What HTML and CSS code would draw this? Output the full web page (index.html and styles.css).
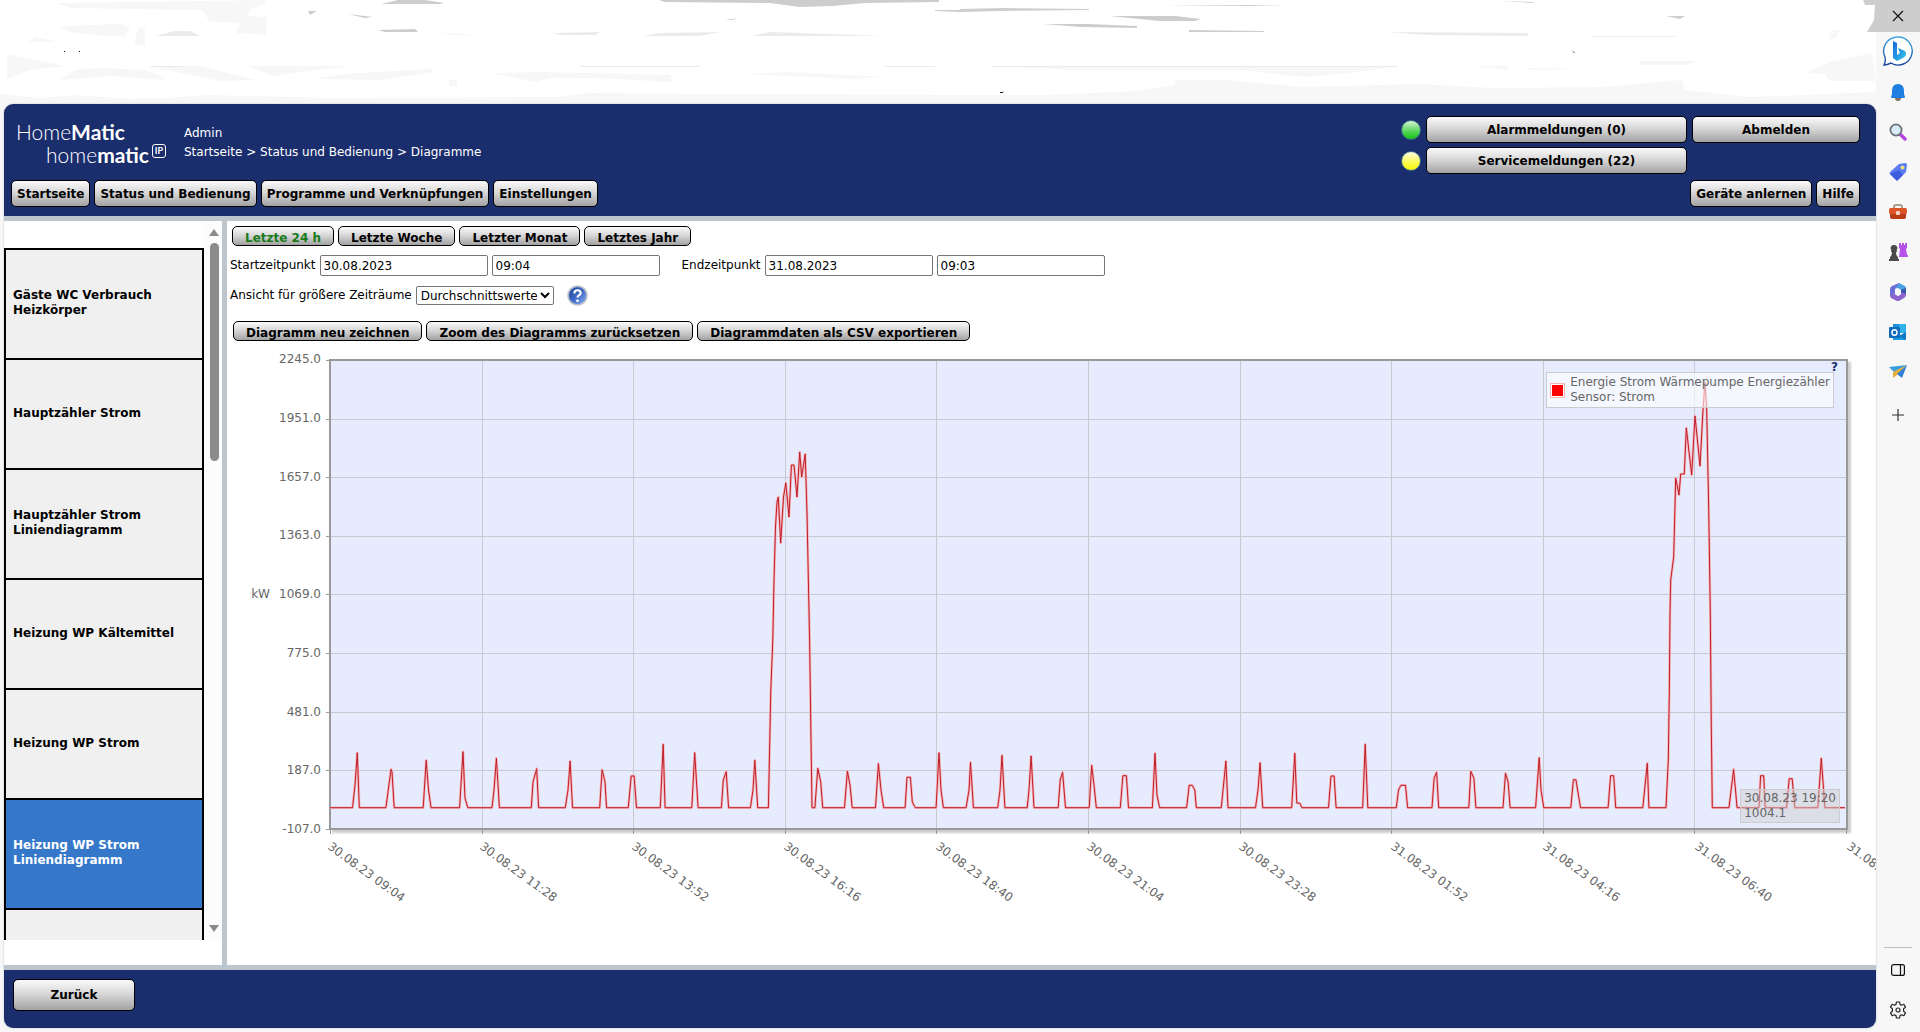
FILE: index.html
```html
<!DOCTYPE html>
<html lang="de">
<head>
    <meta charset="UTF-8">
    <meta name="viewport" content="width=device-width, initial-scale=1.0">
    <link rel="stylesheet" href="styles.css">
    <title>HomeMatic WebUI</title>
</head>
<body>

<div class="page">
    <svg class="browser-top" viewBox="0 0 1876 104" preserveAspectRatio="none" aria-hidden="true">
        <g fill="#f7f7f7">
            <path d="M57 3L266 0L264 4L250 9L246 23L210 22L202 10L70 8Z"/>
            <path d="M60 27L90 25L120 24L130 28L124 36L105 36L70 32Z"/>
            <path d="M28 42L36 37L58 42ZM134 44L138 28L145 27V46ZM236 35L240 24L250 16L267 17L266 35L244 33Z"/>
            <path d="M7 54L65 66L30 70L7 79ZM60 80L75 70L100 68L145 70L162 76L165 80L110 76Z"/>
            <path d="M150 66L200 66L255 80L220 81L190 75ZM247 66H350L300 72L275 76ZM315 79L345 74L430 69L434 72L380 80Z"/>
            <path d="M493 73L540 72L672 75L670 82L600 78L550 78L535 82ZM449 80H457V86H449ZM745 74L790 72L885 77L850 79Z"/>
            <path d="M992 66H1398L1350 73L1305 77L1240 70L1080 70ZM1475 66H1508V70ZM1528 68L1590 69L1530 70ZM1639 61L1695 61L1690 65H1639Z"/>
            <path d="M1805 73L1830 62L1872 53L1876 81H1830L1825 74ZM1832 30L1839 30L1836 38L1828 40Z"/>
            <path d="M0 94L40 98L75 95L130 99L165 98L210 95L330 98L560 97L590 93L700 94L960 95L1049 95L1137 91L1175 85V80H1223L1303 87L1419 84L1493 88L1603 87L1682 80L1685 90L1750 97L1876 92V104H0Z"/>
        </g>
        <g fill="#ebebeb">
            <path d="M155 36L175 31L190 31L200 36ZM435 32L478 36L460 35ZM552 33L600 32L595 35L560 35ZM643 36L660 33L720 32L700 36ZM752 36L770 32L885 36Z"/>
            <path d="M1388 32L1528 33V36L1425 35ZM1592 36H1675V37H1592ZM150 66H185V67H150ZM580 66H700V67H580ZM885 66H935V67H885ZM992 66H1398V67H992Z"/>
        </g>
        <g fill="#cdcdcd">
            <path d="M381 4L398 0L425 0L444 3L440 4ZM659 0H939V2L865 3L832 6L800 7L770 3L665 2ZM935 10H960V12L935 11Z"/>
            <path d="M960 9L1004 8L1089 9V10L1000 11L960 12ZM348 14L373 17L365 18ZM308 11H317L310 15ZM378 30L415 29L418 32H385ZM725 20L738 18L732 20Z"/>
            <path d="M1161 5H1250L1285 6H1249ZM1109 16H1175L1201 19L1195 21H1160ZM1043 24H1088L1137 26V28L1080 27ZM1189 30L1264 31V32H1189Z"/>
            <path d="M1500 1L1533 2V3ZM1666 16H1685L1680 19ZM1863 0H1876V32H1867L1874 20L1875 5L1865 5Z"/>
        </g>
        <g fill="#222">
            <path d="M64 51H65V52H64ZM79 51H80V52H79ZM1572 50L1575 53H1574ZM1000 92L1003 92L1004 90L1003 93H1000Z"/>
        </g>
    </svg>

    <div class="app">
        <header class="header">
            <div class="header-top">
                <div class="logo">
                    <div>Home<b>Matic</b></div>
                    <div class="logo-ip">home<b>matic</b><span>IP</span></div>
                </div>
                <div class="crumbs">
                    <div>Admin</div>
                    <div><a href="#">Startseite</a> &gt; <a href="#">Status und Bedienung</a> &gt; <a href="#">Diagramme</a></div>
                </div>
                <div class="messages">
                    <i class="led led-green"></i>
                    <button class="btn">Alarmmeldungen (0)</button>
                    <button class="btn">Abmelden</button>
                    <i class="led led-yellow"></i>
                    <button class="btn">Servicemeldungen (22)</button>
                </div>
            </div>
            <nav class="nav">
                <button class="btn">Startseite</button>
                <button class="btn">Status und Bedienung</button>
                <button class="btn">Programme und Verknüpfungen</button>
                <button class="btn">Einstellungen</button>
                <button class="btn push">Geräte anlernen</button>
                <button class="btn">Hilfe</button>
            </nav>
        </header>

        <div class="body">
            <aside class="left">
                <div class="list">
                    <a href="#">Gäste WC Verbrauch Heizkörper</a>
                    <a href="#">Hauptzähler Strom</a>
                    <a href="#">Hauptzähler Strom Liniendiagramm</a>
                    <a href="#">Heizung WP Kältemittel</a>
                    <a href="#">Heizung WP Strom</a>
                    <a href="#" class="active">Heizung WP Strom Liniendiagramm</a>
                    <a href="#" aria-label="Weiteres Diagramm"></a>
                </div>
                <div class="scrollbar" aria-hidden="true">
                    <i class="arrow-up"></i>
                    <i class="thumb"></i>
                    <i class="arrow-down"></i>
                </div>
            </aside>

            <main class="content">
                <div class="row tabs">
                    <button class="btn small on">Letzte 24 h</button>
                    <button class="btn small">Letzte Woche</button>
                    <button class="btn small">Letzter Monat</button>
                    <button class="btn small">Letztes Jahr</button>
                </div>
                <div class="row fields">
                    <label for="startDate">Startzeitpunkt</label>
                    <input type="text" id="startDate" value="30.08.2023">
                    <input type="text" aria-label="Startzeit" value="09:04">
                    <label for="endDate" class="end">Endzeitpunkt</label>
                    <input type="text" id="endDate" value="31.08.2023">
                    <input type="text" aria-label="Endzeit" value="09:03">
                </div>
                <div class="row view">
                    <label for="view">Ansicht für größere Zeiträume</label>
                    <select id="view">
                        <option>Durchschnittswerte</option>
                    </select>
                    <svg class="help" viewBox="0 0 20 20" role="img" aria-label="Hilfe">
                        <defs>
                            <linearGradient id="helpFill" x1="0" y1="0" x2="1" y2="1">
                                <stop offset="0" stop-color="#1c3f96"/>
                                <stop offset="0.5" stop-color="#3f69c4"/>
                                <stop offset="1" stop-color="#8fb4f5"/>
                            </linearGradient>
                        </defs>
                        <circle cx="10" cy="10" r="9" fill="url(#helpFill)" stroke="#b9bfcc" stroke-width="1.600"/>
                        <path d="M7 8Q7 5 10 5T13 8Q13 9 11 10Q10 11 10 12" fill="none" stroke="#fff" stroke-width="2"/>
                        <circle cx="10" cy="15" r="1.3" fill="#fff"/>
                    </svg>
                </div>
                <div class="row actions">
                    <button class="btn small">Diagramm neu zeichnen</button>
                    <button class="btn small">Zoom des Diagramms zurücksetzen</button>
                    <button class="btn small">Diagrammdaten als CSV exportieren</button>
                </div>

                <div class="chart">
                    <div class="unit">kW</div>
                    <div class="y-axis">
                        <span>2245.0</span>
                        <span>1951.0</span>
                        <span>1657.0</span>
                        <span>1363.0</span>
                        <span>1069.0</span>
                        <span>775.0</span>
                        <span>481.0</span>
                        <span>187.0</span>
                        <span>-107.0</span>
                    </div>
                    <div class="plot">
                        <svg viewBox="1 1 1515 467" preserveAspectRatio="none">
                            <g id="grid" stroke="#c8cacf"></g>
                            <g id="ticks" stroke="#999"></g>
                            <polyline id="glow" fill="none" stroke="#f6b3ba" stroke-width="2.600" stroke-linejoin="round"/>
                            <polyline id="line" fill="none" stroke="#bd1f29" stroke-width="1" stroke-linejoin="round"/>
                        </svg>
                        <b class="plot-help">?</b>
                        <div class="legend"><i></i><span>Energie Strom Wärmepumpe Energiezähler<br>Sensor: Strom</span></div>
                        <div class="cursor-info">30.08.23 19:20<br>1004.1</div>
                    </div>
                    <div class="x-axis">
                        <span>30.08.23 09:04</span>
                        <span>30.08.23 11:28</span>
                        <span>30.08.23 13:52</span>
                        <span>30.08.23 16:16</span>
                        <span>30.08.23 18:40</span>
                        <span>30.08.23 21:04</span>
                        <span>30.08.23 23:28</span>
                        <span>31.08.23 01:52</span>
                        <span>31.08.23 04:16</span>
                        <span>31.08.23 06:40</span>
                        <span>31.08.23 09:04</span>
                    </div>
                </div>
            </main>
        </div>

        <footer class="footer">
            <button class="btn">Zurück</button>
        </footer>
    </div>
</div>

<div class="sidebar">
    <button class="close" aria-label="Schließen">
        <svg width="12" height="12" viewBox="0 0 12 12"><path d="M1 1L11 11M11 1L1 11" stroke="#111" stroke-width="1.2"/></svg>
    </button>
    <button aria-label="Bing">
        <svg width="32" height="32" viewBox="0 0 32 32">
            <defs>
                <linearGradient id="bingRing" x1="0" y1="0" x2="0" y2="1"><stop offset="0" stop-color="#3aa6e0"/><stop offset="1" stop-color="#1c479e"/></linearGradient>
                <linearGradient id="bingB" x1="0" y1="0" x2="1" y2="1"><stop offset="0" stop-color="#1767d8"/><stop offset="1" stop-color="#37c6ea"/></linearGradient>
            </defs>
            <path d="M16 1A14 14 0 1 1 9 27Q5 29 2 29Q4 25 3 21A14 14 0 0 1 16 1Z" fill="#fff" stroke="url(#bingRing)" stroke-width="1.4"/>
            <path d="M11 5L15 7V19L18 17L16 12L23 15Q26 19 21 22L15 25L11 22Z" fill="url(#bingB)"/>
        </svg>
    </button>
    <button aria-label="Benachrichtigungen">
        <svg width="18" height="18" viewBox="0 0 18 18"><path d="M6 15H12Q12 18 9 18T6 15Z" fill="#8a6d5a"/><path d="M9 1Q15 1 15 8V11L16 14Q16 15 15 15H3Q2 15 2 14L3 11V8Q3 1 9 1Z" fill="#1f7fe0"/></svg>
    </button>
    <button aria-label="Suche">
        <svg width="18" height="18" viewBox="0 0 18 18"><path d="M11 11L16 16" stroke="#b344e0" stroke-width="3.4" stroke-linecap="round"/><circle cx="7" cy="7" r="5.6" fill="#d6ecfa" stroke="#6d7278" stroke-width="1.8"/></svg>
    </button>
    <button aria-label="Einkaufen">
        <svg width="18" height="18" viewBox="0 0 18 18"><path d="M10 1L16 0Q18 0 18 2L17 9L9 17Q8 18 7 17L1 11Q0 10 1 9Z" fill="#5b7df2"/><path d="M1 11L10 7L14 12L9 17Q8 18 7 17Z" fill="#3f5cdc"/><circle cx="13.500" cy="4.500" r="2" fill="#f5dc7a"/></svg>
    </button>
    <button aria-label="Tools">
        <svg width="18" height="16" viewBox="0 0 18 16"><path d="M5 5V3Q5 1 7 1H11Q13 1 13 3V5" fill="none" stroke="#96836f" stroke-width="1.600"/><rect y="4" width="18" height="6" rx="1.500" fill="#dc5428"/><path d="M1 10H17V13Q17 15 15 15H3Q1 15 1 13Z" fill="#b93c16"/><rect x="7" y="7" width="4" height="4" rx="1" fill="#f1d5c2"/></svg>
    </button>
    <button aria-label="Spiele">
        <svg width="20" height="20" viewBox="0 0 20 20"><path d="M11 1H13V3H14V1H16V3H17V1H19V6L18 7L19 13H20V15H11L12 7L11 6Z" fill="#b552ea"/><path d="M6 3A3 3 0 0 1 8 8.500H9V10H8Q8 14 10 15V17H11V19H1V17H2V15Q4 14 4 10H3V8.500H4A3 3 0 0 1 6 3Z" fill="#4a4a4c"/></svg>
    </button>
    <button aria-label="Microsoft 365">
        <svg width="18" height="20" viewBox="0 0 18 20"><path d="M10 1L3 4Q1 5 1 7V14L6 12V8Q6 7 7 6L12 3Z" fill="#6a6fd8"/><path d="M10 1L16 4Q17 5 17 7V13L12 10V8L7 6Z" fill="#4a9fe0"/><path d="M12 8L17 6V13L12 11Z" fill="#3558a8"/><path d="M17 12V13Q17 15 15 16L10 19Q9 19 8 19L2 16Q1 15 1 13L6 12L9 14L12 12V10Z" fill="#8c64cc"/><path d="M9 6L12 8V12L9 14L6 12V8Z" fill="#f7f7f7"/></svg>
    </button>
    <button aria-label="Outlook">
        <svg width="18" height="18" viewBox="0 0 18 18"><path d="M4 1H16V9H4Z" fill="#1b8fd8"/><path d="M10 1H17V10H10Z" fill="#32b2ea"/><path d="M4 9L11 13L17 9V16Q17 17 16 17H4Z" fill="#1a9be0"/><path d="M17 9L10 13L17 17Z" fill="#1378c4"/><rect y="4" width="11" height="11" rx="1" fill="#0f6cbd"/><ellipse cx="5.500" cy="9.500" rx="2.500" ry="2.800" fill="none" stroke="#fff" stroke-width="1.500"/></svg>
    </button>
    <button aria-label="Drop">
        <svg width="18" height="14" viewBox="0 0 18 14"><path d="M0 2L18 0L6 8Z" fill="#3aa0dc"/><path d="M4 7L18 0L8 10L4 13Z" fill="#e7ae3c"/><path d="M18 0L13 13L8 9Z" fill="#2d7fd6"/></svg>
    </button>
    <button class="plus" aria-label="Hinzufügen">
        <svg width="14" height="14" viewBox="0 0 14 14"><path d="M7 1V13M1 7H13" stroke="#333" stroke-width="1.200"/></svg>
    </button>
    <hr>
    <button aria-label="Randleiste">
        <svg width="14" height="12" viewBox="0 0 14 12" fill="none" stroke="#111" stroke-width="1.200"><rect x="0.600" y="0.600" width="12.800" height="10.800" rx="2"/><path d="M9.500 1V11"/></svg>
    </button>
    <button aria-label="Einstellungen">
        <svg width="18" height="18" viewBox="0 0 18 18" fill="none" stroke="#222" stroke-width="1.200"><path d="M7.400 1H10.600L11 3.400L12.500 4.200L14.800 3.300L16.500 6.100L14.600 7.700V10.300L16.500 11.900L14.800 14.700L12.500 13.800L11 14.600L10.600 17H7.400L7 14.600L5.500 13.800L3.200 14.700L1.500 11.900L3.400 10.300V7.700L1.500 6.100L3.200 3.300L5.500 4.200L7 3.400Z" stroke-linejoin="round"/><circle cx="9" cy="9" r="2"/></svg>
    </button>
</div>

<script>
    const BASE = 447.7;

    // each entry is one run of the pump: x, y, x, y, ...
    // the line falls back to BASE between the runs
    const runs = [
        [22.5, BASE, 25, 425, 27.3, 392.7, 29.3, BASE],
        [55.9, BASE, 61, 409.3, 62, 412, 64.2, BASE],
        [93.2, BASE, 96.2, 400.3, 98.5, 430, 101, BASE],
        [129.6, BASE, 133, 391.7, 135, 438, 137.8, BASE],
        [162, BASE, 164, 430, 166.4, 398.3, 169.4, BASE],
        [201.3, BASE, 203, 422, 206.7, 408.7, 208.6, BASE],
        [235.3, BASE, 238, 430, 240.1, 401, 242.5, BASE],
        [269.7, BASE, 272.1, 409.7, 275, 421.7, 276.5, BASE],
        [298.3, BASE, 301.2, 416, 304.1, 416, 306.5, BASE],
        [330.3, BASE, 333.2, 384.3, 335.1, BASE],
        [361.8, BASE, 364.7, 392.7, 368.1, BASE],
        [391.4, BASE, 393.3, 420, 396.2, 411.7, 398.6, BASE],
        [420.4, BASE, 423, 430, 424.8, 400.3, 427.7, BASE],
        [438.4, BASE, 440.8, 330, 442.8, 280, 444, 220, 445.5, 167, 447, 142, 448.3, 137, 450.7, 183, 453.5, 137,
            455.8, 123, 459, 157, 461.4, 105, 464, 105, 467, 137, 469.7, 92, 471.7, 117, 475.2, 94,
            477, 153, 479.6, 280, 482, BASE],
        [484.9, BASE, 487.8, 408.3, 490.7, 421.7, 492.7, BASE],
        [514.5, BASE, 517.4, 411, 520, 425, 522.2, BASE],
        [545.5, BASE, 548.4, 403.7, 551, 430, 553.7, BASE],
        [575.1, BASE, 577, 417.3, 580.4, 417.3, 582.3, 442, 585.3, BASE],
        [606.1, BASE, 609, 392.7, 611, 430, 613.4, BASE],
        [636.1, BASE, 639, 430, 640.5, 402.3, 643.4, BASE],
        [667.7, BASE, 670, 430, 672, 395.3, 674.9, BASE],
        [697.2, BASE, 699, 430, 701.1, 396, 704, BASE],
        [728.2, BASE, 730.2, 420, 732.6, 412.3, 735.5, BASE],
        [759.2, BASE, 761.7, 405.3, 764, 425, 766.3, BASE],
        [790.3, BASE, 792.9, 415.7, 796.4, 415.7, 798.5, BASE],
        [822.4, BASE, 825, 393.3, 827, 435, 829.6, BASE],
        [856.6, BASE, 859.2, 425.3, 862.2, 425.3, 864.8, 430, 866.3, BASE],
        [891.3, BASE, 895.9, 401, 898, BASE],
        [925.5, BASE, 928, 430, 930.1, 402.7, 932.7, BASE],
        [961.7, BASE, 964.8, 393.3, 966.8, 443, 969.9, 443.3, 971.9, BASE],
        [998.5, BASE, 1001, 416, 1004.1, 416, 1006.1, BASE],
        [1032.7, BASE, 1035.2, 384.3, 1037.8, BASE],
        [1066.3, BASE, 1068.5, 430, 1070.9, 425.3, 1075.5, 425.3, 1077.6, BASE],
        [1102, BASE, 1104.1, 418.3, 1106.6, 412.3, 1108.7, BASE],
        [1138.8, BASE, 1140.8, 411.3, 1143.9, 418.3, 1145.9, BASE],
        [1173, BASE, 1175.5, 413.3, 1178.1, 421.7, 1180.1, BASE],
        [1205.6, BASE, 1209.2, 397.7, 1211, 430, 1213.8, BASE],
        [1240.8, BASE, 1243.4, 419.7, 1245.9, 419.7, 1250.5, BASE],
        [1278.1, BASE, 1280.6, 415.7, 1283.7, 415.7, 1285.7, BASE],
        [1312.8, BASE, 1317.3, 403.3, 1318.9, BASE],
        [1336, BASE, 1338.3, 400, 1339.3, 333, 1340, 253, 1340.7, 220, 1343.7, 197, 1345.7, 118, 1349, 135,
            1350.7, 114, 1354.3, 114, 1356.3, 68, 1361.7, 115, 1365, 56, 1370, 106, 1373, 50, 1375, 22,
            1376.7, 50, 1378.7, 147, 1380.3, 253, 1381.3, 367, 1382.3, BASE],
        [1399, BASE, 1403.6, 409.3, 1407.1, BASE],
        [1429, BASE, 1430.6, 415.7, 1433.7, 415.7, 1435.2, BASE],
        [1456.6, BASE, 1459.2, 418.7, 1462.2, 418.7, 1464.8, BASE],
        [1487.8, BASE, 1491.3, 398.3, 1494.9, BASE]
    ];

    const points = [0, BASE, ...runs.flat(), 1515, BASE].join(' ');
    document.getElementById('glow').setAttribute('points', points);
    document.getElementById('line').setAttribute('points', points);

    function addLine(parent, x1, y1, x2, y2) {
        const line = document.createElementNS('http://www.w3.org/2000/svg', 'line');
        line.setAttribute('x1', x1);
        line.setAttribute('y1', y1);
        line.setAttribute('x2', x2);
        line.setAttribute('y2', y2);
        document.getElementById(parent).appendChild(line);
    }

    for (let i = 0; i <= 10; i++) {
        const x = Math.round(i * 151.6) + 0.5;
        if (i > 0 && i < 10) addLine('grid', x, 1, x, 468);
        addLine('ticks', x, 470, x, 474);
    }
    for (let i = 0; i <= 8; i++) {
        const y = Math.round(i * 58.6) + 0.5;
        if (i > 0 && i < 8) addLine('grid', 1, y, 1516, y);
        addLine('ticks', -4, y, 0, y);
    }
</script>

</body>
</html>
```
FILE: styles.css
```css
* {
    box-sizing: border-box;
}

body {
    margin: 0;
    height: 100vh;
    display: flex;
    background: #f7f7f7;
    font-family: Verdana, "DejaVu Sans", sans-serif;
    font-size: 12px;
    line-height: 15px;
    color: #000;
}

a {
    color: inherit;
    text-decoration: none;
}

button, input, select {
    font: inherit;
}

.page {
    flex: 1;
    min-width: 0;
    display: flex;
    flex-direction: column;
}

.browser-top {
    display: block;
    width: 100%;
    height: 104px;
    background: #fff;
}

.app {
    flex: 1;
    min-height: 0;
    margin: 0 0 4px 4px;
    display: flex;
    flex-direction: column;
    background: #fff;
    border-radius: 9px;
    overflow: hidden;
    box-shadow: 0 0 2px #bbb;
}

/* buttons */
.btn {
    height: 27px;
    padding: 1px 5px 0;
    border: 1px solid #000;
    border-radius: 5px;
    background: linear-gradient(#fafafa, #d4d4d4 50%, #a2a2a2);
    font-weight: bold;
    color: #000;
    white-space: nowrap;
}

.btn.small {
    height: 20px;
    padding: 4px 12px 0;
    line-height: 15px;
}

.btn.on {
    color: #1a7a1a;
}

/* header */
.header {
    display: flex;
    flex-direction: column;
    gap: 6px;
    padding: 12px 16px 9px 7px;
    background: #1a2d6d;
    border-bottom: 5px solid #bcc6cc;
    color: #fff;
}

.header-top {
    display: flex;
}

.logo {
    width: 173px;
    padding: 4px 0 0 5px;
    font-family: Lato, sans-serif;
    font-size: 21px;
    font-weight: 300;
    line-height: 23px;
}

.logo b {
    font-weight: 700;
}

.logo-ip {
    display: flex;
    padding-left: 30px;
}

.logo-ip span {
    width: 14px;
    height: 14px;
    margin: 1px 0 0 3px;
    border: 1px solid #fff;
    border-radius: 3px;
    font-size: 9px;
    font-weight: bold;
    line-height: 12px;
    text-align: center;
}

.crumbs {
    padding-top: 8px;
    line-height: 19px;
}

.messages {
    display: grid;
    grid-template-columns: 20px 261px 168px;
    gap: 4px 5px;
    align-items: center;
    margin-left: auto;
}

.led {
    height: 20px;
    border-radius: 50%;
    border: 1px solid #3a6a8a;
}

.led-green {
    background: linear-gradient(#d5f5d5, #5cd65c 55%, #12c412);
}

.led-yellow {
    background: linear-gradient(#ffffe4, #fbfb58 55%, #f7f70c);
}

.nav {
    display: flex;
    gap: 4px;
}

.nav .push {
    margin-left: auto;
}

/* list on the left */
.body {
    flex: 1;
    min-height: 0;
    display: flex;
}

.left {
    flex: none;
    width: 223px;
    padding-bottom: 25px;
    border-right: 5px solid #bcc6cc;
    display: flex;
}

.list {
    width: 200px;
    margin-top: 27px;
    overflow: hidden;
    display: flex;
    flex-direction: column;
}

.list a {
    flex: 0 0 110px;
    display: flex;
    align-items: center;
    padding: 0 40px 2px 7px;
    border: 2px solid #000;
    border-bottom: 0;
    background: #f0f0f0;
    font-weight: bold;
}

.list a:not(:first-child) {
    padding-right: 20px;
}

.list a.active {
    background: #3578ca;
    color: #fff;
}

.scrollbar {
    flex: 1;
    display: flex;
    flex-direction: column;
    align-items: center;
    padding: 8px 0 8px 2px;
    background: #fcfcfc;
}

.arrow-up, .arrow-down {
    border: 5px solid transparent;
}

.arrow-up {
    border-top: 0;
    border-bottom: 7px solid #8b8b8b;
}

.arrow-down {
    margin-top: auto;
    border-bottom: 0;
    border-top: 7px solid #8b8b8b;
}

.thumb {
    width: 9px;
    height: 218px;
    margin-top: 7px;
    border-radius: 5px;
    background: #8b8b8b;
}

/* content */
.content {
    flex: 1;
    min-width: 0;
    display: flex;
    flex-direction: column;
    padding: 5px 28px 0 3px;
    overflow: hidden;
}

.row {
    display: flex;
    align-items: center;
    gap: 4px;
}

.tabs {
    padding-left: 2px;
    margin-bottom: 9px;
}

.fields {
    margin-bottom: 9px;
}

.fields input {
    width: 168px;
    height: 21px;
    padding: 0 3px;
    border: 1px solid #767676;
    border-radius: 2px;
}

.fields .end {
    margin-left: 18px;
}

.view {
    margin-bottom: 15px;
}

.view select {
    width: 138px;
    height: 19px;
    padding: 0;
    border: 1px solid #767676;
    border-radius: 2px;
    background: #fff;
}

.help {
    width: 21px;
    height: 21px;
    margin-left: 9px;
}

.actions {
    padding-left: 3px;
    margin-bottom: 18px;
}

/* diagram */
.chart {
    flex: 1;
    min-height: 0;
    display: grid;
    grid-template-columns: 40px 59px 1fr;
    grid-template-rows: 1fr 135px;
    color: #666;
}

.unit {
    align-self: center;
    text-align: right;
}

.y-axis {
    display: flex;
    flex-direction: column;
    justify-content: space-between;
    margin: -7px 8px -7px 0;
    text-align: right;
}

.plot {
    position: relative;
    min-height: 0;
    border: 2px solid #999;
    background: #e6ecfd;
    box-shadow: 3px 3px 2px rgba(0, 0, 0, 0.2);
}

.plot svg {
    position: absolute;
    width: 100%;
    height: 100%;
    overflow: visible;
}

.plot-help {
    position: absolute;
    top: -1px;
    right: 8px;
    color: #1a2d6d;
}

.legend {
    position: absolute;
    top: 11px;
    right: 12px;
    display: flex;
    align-items: center;
    gap: 5px;
    padding: 2px 3px;
    border: 1px solid #ccc;
    background: rgba(255, 255, 255, 0.6);
}

.legend i {
    width: 15px;
    height: 15px;
    border: 1px solid #f5b5b5;
    background: #f00;
    box-shadow: inset 0 0 0 1px #fff;
}

.cursor-info {
    position: absolute;
    right: 6px;
    bottom: 5px;
    padding: 1px 3px;
    border: 1px solid #ccc;
    background: rgba(208, 208, 208, 0.5);
}

.x-axis {
    grid-column: 3;
    display: flex;
    justify-content: space-between;
    padding-top: 8px;
}

.x-axis span {
    width: 0;
    height: 15px;
    white-space: nowrap;
    transform: rotate(36deg);
    transform-origin: 0 50%;
}

/* footer */
.footer {
    height: 63px;
    padding: 9px;
    background: #1a2d6d;
    border-top: 5px solid #bcc6cc;
}

.footer .btn {
    width: 122px;
    height: 32px;
}

/* browser sidebar */
.sidebar {
    flex: none;
    width: 44px;
    display: flex;
    flex-direction: column;
    padding-bottom: 2px;
}

.sidebar button {
    height: 40px;
    padding: 0;
    border: 0;
    background: none;
    display: flex;
    align-items: center;
    justify-content: center;
}

.sidebar .close {
    height: 32px;
    background: #cdcdcd;
}

.sidebar .plus {
    margin-top: 3px;
}

.sidebar hr {
    width: 28px;
    margin: auto auto 2px;
    border: 0;
    border-top: 1px solid #c0c0c0;
}
```
